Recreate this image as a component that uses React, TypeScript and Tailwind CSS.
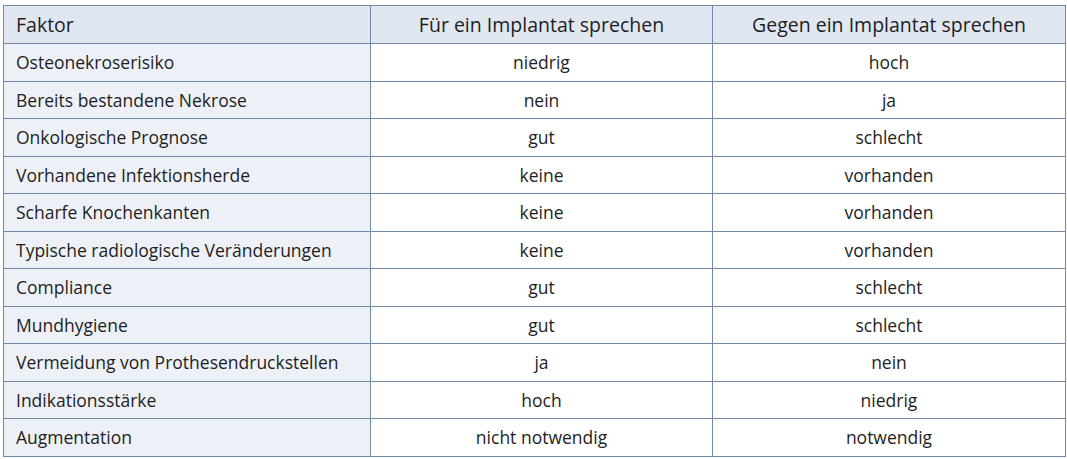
const rows: [string, string, string][] = [
  ['Osteonekroserisiko', 'niedrig', 'hoch'],
  ['Bereits bestandene Nekrose', 'nein', 'ja'],
  ['Onkologische Prognose', 'gut', 'schlecht'],
  ['Vorhandene Infektionsherde', 'keine', 'vorhanden'],
  ['Scharfe Knochenkanten', 'keine', 'vorhanden'],
  ['Typische radiologische Veränderungen', 'keine', 'vorhanden'],
  ['Compliance', 'gut', 'schlecht'],
  ['Mundhygiene', 'gut', 'schlecht'],
  ['Vermeidung von Prothesendruckstellen', 'ja', 'nein'],
  ['Indikationsstärke', 'hoch', 'niedrig'],
  ['Augmentation', 'nicht notwendig', 'notwendig'],
]

export default function App() {
  return (
    <div className="bg-white pl-[3px] pt-[5px] w-[1067px] h-[459px] font-['Open_Sans',sans-serif] text-[#1e1e1e] text-[17.5px]">
      <table className="w-[1062px] border-collapse table-fixed">
        <colgroup>
          <col className="w-[367px]" />
          <col className="w-[342px]" />
          <col className="w-[353px]" />
        </colgroup>
        <thead>
          {/* header row */}
          <tr className="h-[38px] bg-[#e0e7f1] text-[19.5px]">
            <th className="border border-[#7089a8] px-[12px] text-left font-normal">Faktor</th>
            <th className="border border-[#7089a8] text-center font-normal">Für ein Implantat sprechen</th>
            <th className="border border-[#7089a8] text-center font-normal">Gegen ein Implantat sprechen</th>
          </tr>
        </thead>
        <tbody>
          {rows.map(([f, pro, contra]) => (
            <tr key={f} className="h-[37.5px]">
              <td className="border border-[#7089a8] bg-[#edf1f7] px-[12px]">{f}</td>
              <td className="border border-[#7089a8] text-center">{pro}</td>
              <td className="border border-[#7089a8] text-center">{contra}</td>
            </tr>
          ))}
        </tbody>
      </table>
    </div>
  )
}
